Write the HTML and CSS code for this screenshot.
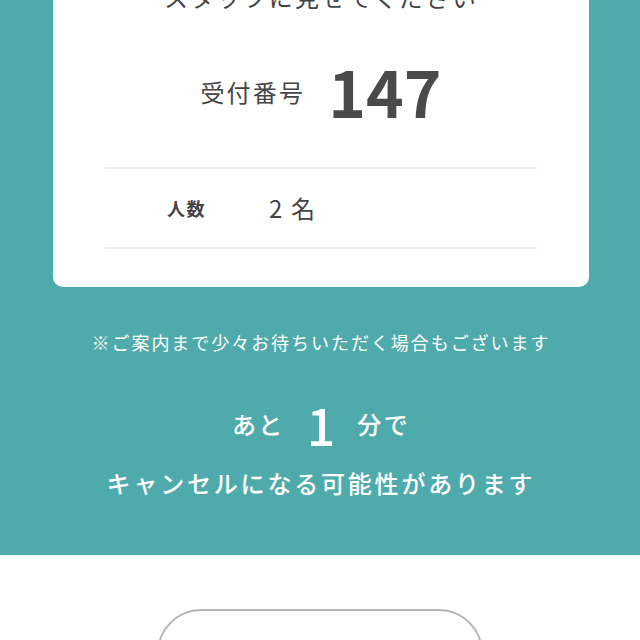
FILE: index.html
```html
<!DOCTYPE html>
<html lang="ja">
<head>
    <meta charset="UTF-8">
    <meta name="viewport" content="width=device-width, initial-scale=1.0">
    <link rel="stylesheet" href="styles.css">
    <title>受付状況</title>
</head>
<body>
    <main class="page">
        <!-- Waiting status -->
        <section class="status">
            <div class="ticket">
                <p class="ticket-title">スタッフに見せてください</p>
                <div class="ticket-number">
                    <span class="ticket-label">受付番号</span>
                    <span class="ticket-value">147</span>
                </div>
                <dl class="ticket-info">
                    <dt>人数</dt>
                    <dd>2 名</dd>
                </dl>
            </div>

            <p class="notice">※ご案内まで少々お待ちいただく場合もございます</p>

            <p class="countdown">
                <span>あと</span>
                <span class="countdown-minutes">1</span>
                <span>分で</span>
            </p>
            <p class="warning">キャンセルになる可能性があります</p>
        </section>

        <!-- Actions -->
        <section class="actions">
            <button class="btn-outline" type="button">受付をキャンセルする</button>
        </section>
    </main>
</body>
</html>
```

FILE: styles.css
```css
/* Base */
body {
    margin: 0;
    padding: 0;
    background-color: #fff;
    color: #444;
    font-family: "Noto Sans CJK JP", "Noto Sans", sans-serif;
}

p {
    margin: 0;
}

/* Page is shown scrolled a little */
.page {
    margin-top: -91px;
}

/* Status section */
.status {
    background-color: #4fabab;
    color: #fff;
    padding: 40px 51px 54px 53px;
    text-align: center;
    letter-spacing: 0.14em;
}

/* Ticket card */
.ticket {
    background-color: #fff;
    color: #444;
    border-radius: 10px;
    padding: 30px 52px 38px;
}

.ticket-title {
    font-size: 24px;
    line-height: 36px;
}

.ticket-number {
    margin-top: 43px;
    display: flex;
    justify-content: center;
    align-items: center;
    gap: 23px;
}

.ticket-label {
    margin-top: 4px;
    font-size: 24px;
    line-height: 36px;
}

.ticket-value {
    font-size: 64px;
    line-height: 64px;
    font-weight: 700;
    letter-spacing: 0;
    color: #4a4a4a;
}

.ticket-info {
    margin: 45px 0 0;
    padding: 21px 0;
    display: flex;
    align-items: center;
    border-top: 2px solid #eee;
    border-bottom: 2px solid #eee;
    text-align: left;
    letter-spacing: 0.1em;
}

.ticket-info dt {
    width: 102px;
    padding-left: 62px;
    font-size: 18px;
    line-height: 36px;
    font-weight: 700;
}

.ticket-info dd {
    margin: 0;
    font-size: 24px;
    line-height: 36px;
}

/* Messages on teal */
.notice {
    margin-top: 42px;
    font-size: 18px;
    line-height: 27px;
    letter-spacing: 1.95px;
}

.countdown {
    margin-top: 43px;
    display: flex;
    justify-content: center;
    align-items: center;
    gap: 22px;
    font-size: 24px;
    line-height: 36px;
    font-weight: 500;
    letter-spacing: 0.1em;
}

.countdown-minutes {
    font-size: 50px;
    line-height: 50px;
    letter-spacing: 0;
}

.warning {
    margin-top: 16px;
    font-size: 24px;
    line-height: 36px;
    font-weight: 500;
    letter-spacing: 2.8px;
}

/* Actions */
.actions {
    padding: 54px 0 40px;
    display: flex;
    justify-content: center;
}

.btn-outline {
    width: 326px;
    height: 100px;
    background-color: #fff;
    border: 2px solid #b5b5b5;
    border-radius: 44px;
    color: #444;
    font-family: inherit;
    font-size: 18px;
    letter-spacing: 0.1em;
}
```
